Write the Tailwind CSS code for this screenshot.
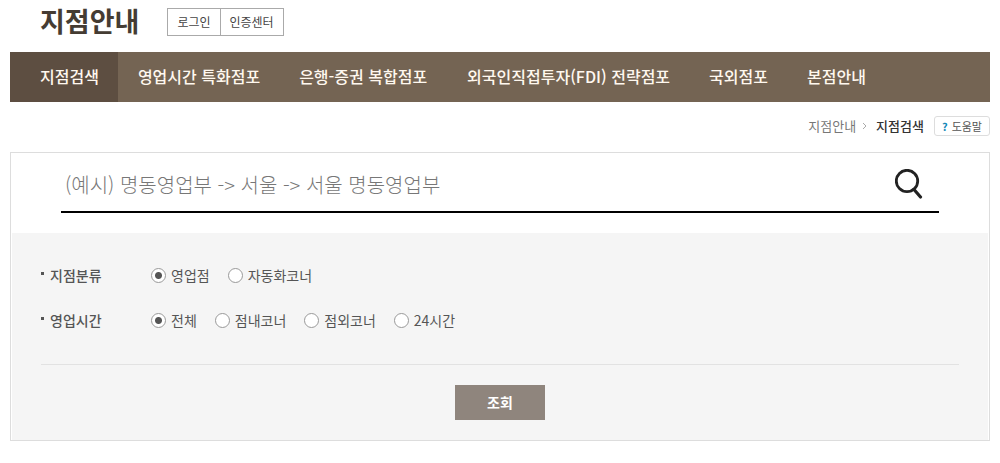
<!DOCTYPE html>
<html lang="ko">
  <head>
    <meta charset="UTF-8" />
    <meta name="viewport" content="width=device-width, initial-scale=1.0" />
    <title>지점안내 - 지점검색</title>
    <script src="https://cdn.jsdelivr.net/npm/@tailwindcss/browser@4"></script>
  </head>
  <body class="bg-white font-['Noto_Sans_CJK_KR',sans-serif] text-[#555]">
    <div class="px-[10px] pb-5">
      <!-- Page title -->
      <header class="flex items-start h-[52px] pl-[30px]">
        <h1 class="text-[27px] leading-[42px] font-bold text-[#453c33]">
          지점안내
        </h1>
        <div
          class="flex mt-2 ml-7 border border-[#aaa] divide-x divide-[#aaa] text-xs leading-[26px] text-[#444]"
        >
          <a href="#" class="px-[9px]">로그인</a>
          <a href="#" class="px-[9px]">인증센터</a>
        </div>
      </header>

      <!-- Main tabs -->
      <nav class="bg-[#746453] text-base font-medium text-[#fff8ef]">
        <ul class="flex leading-[48px] whitespace-nowrap">
          <li class="bg-[#5d4e41]">
            <a href="#" class="block pl-[30px] pr-[19px] pb-[2px]" aria-current="page">지점검색</a>
          </li>
          <li><a href="#" class="block pl-5 pr-[19px] pb-[2px]">영업시간 특화점포</a></li>
          <li><a href="#" class="block px-5 pb-[2px]">은행-증권 복합점포</a></li>
          <li><a href="#" class="block pl-5 pr-[19px] pb-[2px]">외국인직접투자(FDI) 전략점포</a></li>
          <li><a href="#" class="block pl-5 pr-[19px] pb-[2px]">국외점포</a></li>
          <li><a href="#" class="block pl-5 pr-[19px] pb-[2px]">본점안내</a></li>
        </ul>
      </nav>

      <!-- Breadcrumb -->
      <div class="flex justify-end items-center h-[50px] pb-[2px] text-[13px]">
        <a href="#" class="text-[#777]">지점안내</a>
        <svg class="w-[5px] h-2 ml-[6px] mr-[9px]" viewBox="0 0 5 8" fill="none" stroke="#aaa">
          <path d="M1 1l3 3-3 3" />
        </svg>
        <span class="font-medium text-[#333]">지점검색</span>
        <button
          type="button"
          class="flex items-center h-5 ml-[10px] px-[7px] border border-[#ddd] rounded-[3px] text-[11px] text-[#555]"
        >
          <span class="mr-1 font-bold text-[#1489b8]">?</span>도움말
        </button>
      </div>

      <!-- Branch search -->
      <form class="border border-[#ddd]">
        <div class="px-[50px] pb-5">
          <div class="flex items-center h-[60px] pt-1 border-b-2 border-black">
            <input
              type="text"
              aria-label="지점 검색어"
              placeholder="(예시) 명동영업부 -> 서울 -> 서울 명동영업부"
              class="grow h-10 pl-1 text-xl font-light text-[#333] placeholder:text-[#777] outline-none"
            />
            <button type="submit" aria-label="검색" class="mr-4">
              <svg class="w-7 h-[30px]" viewBox="0 0 28 30" fill="none" stroke="#222">
                <circle cx="12" cy="12" r="10.7" stroke-width="2.8" />
                <path d="M19 20.5l6.5 7.5" stroke-width="3.2" stroke-linecap="round" />
              </svg>
            </button>
          </div>
        </div>

        <div class="bg-[#f5f5f5] mx-px px-[29px] pt-5 pb-5 text-sm">
          <div class="flex items-center h-[45px]" role="radiogroup" aria-labelledby="type-label">
            <span class="size-[3px] mb-1 mr-[6px] bg-[#555]"></span>
            <span id="type-label" class="w-[101px] pb-[2px] font-medium">지점분류</span>
            <div class="flex gap-[18px]">
              <label class="flex items-center gap-[5px]">
                <input
                  type="radio"
                  name="type"
                  checked
                  class="appearance-none size-[15px] rounded-full border border-[#999] bg-white checked:bg-[radial-gradient(circle,#555_3px,#fff_4px)]"
                />
                <span class="pb-[2px]">영업점</span>
              </label>
              <label class="flex items-center gap-[5px]">
                <input
                  type="radio"
                  name="type"
                  class="appearance-none size-[15px] rounded-full border border-[#999] bg-white checked:bg-[radial-gradient(circle,#555_3px,#fff_4px)]"
                />
                <span class="pb-[2px]">자동화코너</span>
              </label>
            </div>
          </div>

          <div class="flex items-center h-[45px]" role="radiogroup" aria-labelledby="hours-label">
            <span class="size-[3px] mb-1 mr-[6px] bg-[#555]"></span>
            <span id="hours-label" class="w-[101px] pb-[2px] font-medium">영업시간</span>
            <div class="flex gap-[18px]">
              <label class="flex items-center gap-[5px]">
                <input
                  type="radio"
                  name="hours"
                  checked
                  class="appearance-none size-[15px] rounded-full border border-[#999] bg-white checked:bg-[radial-gradient(circle,#555_3px,#fff_4px)]"
                />
                <span class="pb-[2px]">전체</span>
              </label>
              <label class="flex items-center gap-[5px]">
                <input
                  type="radio"
                  name="hours"
                  class="appearance-none size-[15px] rounded-full border border-[#999] bg-white checked:bg-[radial-gradient(circle,#555_3px,#fff_4px)]"
                />
                <span class="pb-[2px]">점내코너</span>
              </label>
              <label class="flex items-center gap-[5px]">
                <input
                  type="radio"
                  name="hours"
                  class="appearance-none size-[15px] rounded-full border border-[#999] bg-white checked:bg-[radial-gradient(circle,#555_3px,#fff_4px)]"
                />
                <span class="pb-[2px]">점외코너</span>
              </label>
              <label class="flex items-center gap-[5px]">
                <input
                  type="radio"
                  name="hours"
                  class="appearance-none size-[15px] rounded-full border border-[#999] bg-white checked:bg-[radial-gradient(circle,#555_3px,#fff_4px)]"
                />
                <span class="pb-[2px]">24시간</span>
              </label>
            </div>
          </div>

          <div class="flex justify-center mt-[21px] pt-5 border-t border-[#e2e2e2]">
            <button type="submit" class="w-[90px] h-[35px] pb-[2px] bg-[#8f857d] text-sm font-bold text-white">
              조회
            </button>
          </div>
        </div>
      </form>
    </div>
  </body>
</html>
